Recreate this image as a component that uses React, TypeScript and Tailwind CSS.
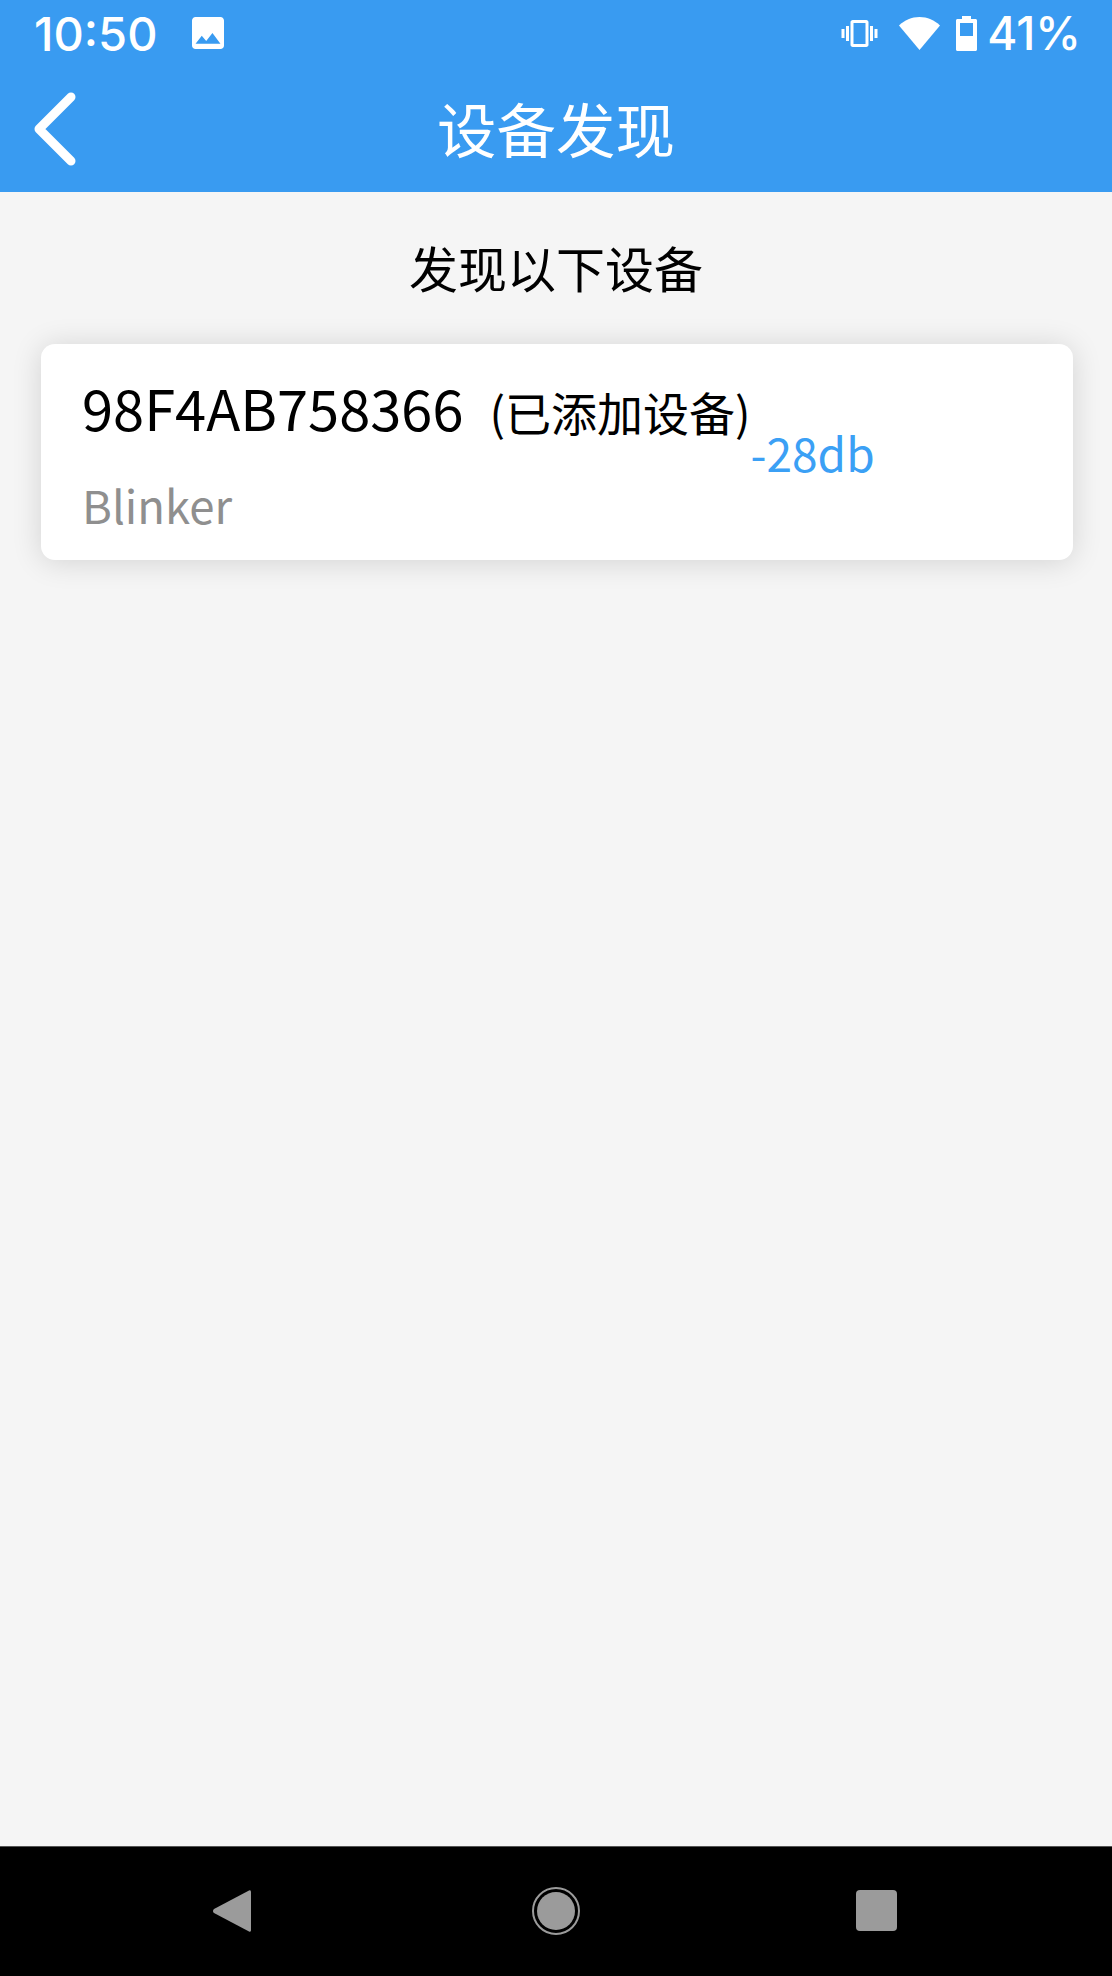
const CJK = "font-['Noto_Sans_CJK_SC','Noto_Sans',sans-serif]";

function PhotoIcon() {
  return (
    <svg viewBox="3 3 18 18" className="h-8 w-8 fill-white">
      <path d="M21 19V5c0-1.1-.9-2-2-2H5c-1.100 0-2 .9-2 2v14c0 1.100.9 2 2 2h14c1.100 0 2-.9 2-2zM8.500 13.500l2.500 3.010L14.500 12l4.500 6H5l3.500-4.500z" />
    </svg>
  );
}

function VibrateIcon() {
  return (
    <svg viewBox="0 3 24 18" className="h-[27px] w-[37px] fill-white">
      <path d="M0 15h2V9H0v6zm3 2h2V7H3v10zm19-8v6h2V9h-2zm-3 8h2V7h-2v10zM16.500 3h-9C6.670 3 6 3.670 6 4.500v15c0 .83.67 1.500 1.500 1.500h9c.83 0 1.500-.67 1.500-1.500v-15c0-.83-.67-1.500-1.500-1.500zM16 19H8V5h8v14z" />
    </svg>
  );
}

function WifiIcon() {
  return (
    <svg viewBox="0 0 41 33" className="h-[33px] w-[41px] fill-white">
      <path d="M20.500 33 0 8.500C5.500 3.200 12.600 0 20.500 0S35.500 3.200 41 8.500z" />
    </svg>
  );
}

function BatteryIcon() {
  return (
    <svg viewBox="0 0 21 35" className="h-[35px] w-[21px] fill-white">
      <path d="M6 0h9v3h4.500c.8 0 1.500.7 1.500 1.500v29c0 .8-.7 1.500-1.500 1.500h-18C.7 35 0 34.300 0 33.500v-29C0 3.700.7 3 1.500 3H6zM4 7v13h13V7z" />
    </svg>
  );
}

function StatusBar() {
  return (
    <div className="flex h-[64px] items-center pl-[34px] pr-[31px] pt-[2px]">
      <span className="font-['Inter',sans-serif] text-[47px] font-medium leading-none text-white">10:50</span>
      <div className="ml-[34px]">
        <PhotoIcon />
      </div>
      <div className="ml-auto flex items-center">
        <VibrateIcon />
        <div className="ml-[21px]">
          <WifiIcon />
        </div>
        <div className="ml-[16px]">
          <BatteryIcon />
        </div>
        <span className="ml-[10px] font-['Inter',sans-serif] text-[46px] font-medium leading-none text-white">41%</span>
      </div>
    </div>
  );
}

function AppBar() {
  return (
    <div className="relative flex h-[128px] items-center justify-center">
      <svg viewBox="0 0 44 74" className="absolute left-[33px] top-[28px] h-[74px] w-[44px]">
        <path d="M38 5 6 37l32 32" fill="none" stroke="#fff" strokeWidth="9" strokeLinecap="round" strokeLinejoin="round" />
      </svg>
      <span className={`${CJK} text-[59.500px] leading-none text-white`}>设备发现</span>
    </div>
  );
}

function DeviceCard() {
  return (
    <div className="ml-[41px] mr-[39px] mt-[47px] flex h-[216px] items-center rounded-[14px] bg-white pl-[41px] shadow-[0_2px_30px_rgba(0,0,0,0.14)]">
      <div className="flex flex-col">
        <div className="flex items-baseline">
          <span className={`${CJK} text-[56px] leading-[72px] text-black`}>98F4AB758366</span>
          <span className={`${CJK} ml-[26px] text-[46px] leading-[72px] text-black`}>(已添加设备)</span>
        </div>
        <span className={`${CJK} mt-[27px] text-[45.500px] leading-[60px] text-[#8f8f8f]`}>Blinker</span>
      </div>
      <span className={`${CJK} text-[46px] leading-none text-[#3ba0f5]`}>-28db</span>
    </div>
  );
}

function NavBar() {
  return (
    <div className="flex h-[130px] items-center border-t border-[#555] bg-black pb-[2px]">
      <svg viewBox="0 0 38 44" className="ml-[213px] h-[44px] w-[38px]">
        <path d="M36 1.500a1.500 1.500 0 0 1 2 1v39a1.500 1.500 0 0 1-2 1L1 24a2.500 2.500 0 0 1 0-4z" fill="#9b9b9b" />
      </svg>
      <div className="ml-[281px] flex h-[48px] w-[48px] items-center justify-center rounded-full border-2 border-[#9b9b9b]">
        <div className="h-[38px] w-[38px] rounded-full bg-[#9b9b9b]" />
      </div>
      <div className="ml-[276px] h-[41px] w-[41px] rounded-[4px] bg-[#9b9b9b]" />
    </div>
  );
}

export default function App() {
  return (
    <div className="flex h-[1976px] w-[1112px] flex-col overflow-hidden bg-[#f5f5f5]">
      <header className="bg-[#399bf1]">
        <StatusBar />
        <AppBar />
      </header>

      <main className="flex-1">
        <p className={`${CJK} mt-[45px] text-center text-[49px] leading-[60px] text-black`}>发现以下设备</p>
        <DeviceCard />
      </main>

      <NavBar />
    </div>
  );
}
